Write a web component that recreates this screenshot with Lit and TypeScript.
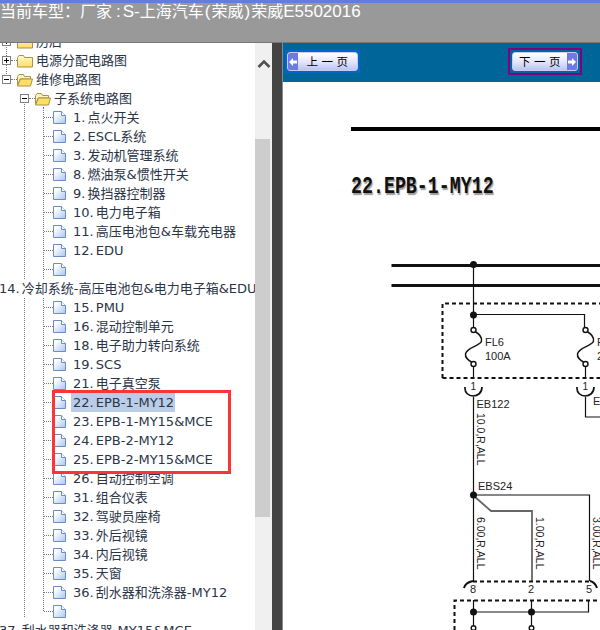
import { LitElement, html, svg, css } from "lit";
import { customElement } from "lit/decorators.js";

type Row = { t: string; kind: "file" | "folder" | "flat"; depth?: number; box?: "+" | "-"; sel?: boolean };
const f = (t: string, sel = false): Row => ({ t, kind: "file", sel });
const rows: Row[] = [
  { t: "历后", kind: "folder", depth: 0, box: "+" },
  { t: "电源分配电路图", kind: "folder", depth: 0, box: "+" },
  { t: "维修电路图", kind: "folder", depth: 0, box: "-" },
  { t: "子系统电路图", kind: "folder", depth: 1, box: "-" },
  f("1. 点火开关"), f("2. ESCL系统"), f("3. 发动机管理系统"), f("8. 燃油泵&惯性开关"), f("9. 换挡器控制器"),
  f("10. 电力电子箱"), f("11. 高压电池包&车载充电器"), f("12. EDU"), f(""),
  { t: "14. 冷却系统-高压电池包&电力电子箱&EDU", kind: "flat" },
  f("15. PMU"), f("16. 混动控制单元"), f("18. 电子助力转向系统"), f("19. SCS"), f("21. 电子真空泵"),
  f("22. EPB-1-MY12", true), f("23. EPB-1-MY15&MCE"), f("24. EPB-2-MY12"), f("25. EPB-2-MY15&MCE"),
  f("26. 自动控制空调"), f("31. 组合仪表"), f("32. 驾驶员座椅"), f("33. 外后视镜"), f("34. 内后视镜"),
  f("35. 天窗"), f("36. 刮水器和洗涤器-MY12"), f(""),
  { t: "37. 刮水器和洗涤器-MY15&MCE", kind: "flat" },
];

const fileIcon = html`<svg class="ico" width="13" height="15" viewBox="0 0 13 15">
  <defs><linearGradient id="fg" x1="0" y1="0" x2="1" y2="1"><stop offset="0.2" stop-color="#fff"/><stop offset="1" stop-color="#a9c6f2"/></linearGradient></defs>
  <path d="M0.5 1.5H8.5L12.500 5.500V13.500H0.5Z" fill="url(#fg)" stroke="#6d8cc6"/><path d="M8.500 1.500V5.500H12.500" fill="#fff" stroke="#6d8cc6"/></svg>`;
const folderClosed = html`<svg class="ico" width="16" height="14" viewBox="0 0 16 14">
  <defs><linearGradient id="fy" x1="0" y1="0" x2="0" y2="1"><stop offset="0" stop-color="#fffbd0"/><stop offset="1" stop-color="#ffdc60"/></linearGradient></defs>
  <path d="M0.500 3.500L2 1.500H6.500L7.500 3.500H15.500V13H0.500Z" fill="url(#fy)" stroke="#a8924c"/></svg>`;
const folderOpen = html`<svg class="ico" width="16" height="14" viewBox="0 0 16 14">
  <path d="M0.500 3.500L2 1.500H6.500L7.500 3.500H13.500V6H3L0.500 13Z" fill="#fff4b8" stroke="#a8924c"/><path d="M0.500 13L3.500 6H15.500L13.500 13Z" fill="#ffde68" stroke="#a8924c"/></svg>`;

const wire = "#111";
const fuse = (x: number) => svg`
  <path d="M${x + 1.5} 331.5C${x + 6} 334 ${x + 8.500} 337 ${x + 8} 341C${x + 7.500} 346 ${x - 7} 347 ${x - 8} 354C${x - 8.500} 358 ${x - 4} 361 ${x - 1} 362.500" fill="none" stroke="${wire}" stroke-width="1.5"/>
  <circle cx="${x}" cy="330" r="2.500" fill="#fff" stroke="${wire}" stroke-width="1.4"/>
  <circle cx="${x}" cy="364" r="2.500" fill="#fff" stroke="${wire}" stroke-width="1.4"/>`;
const vtext = (x: number, y: number, t: string) => svg`<text class="d v" transform="translate(${x} ${y}) rotate(90)">${t}</text>`;

const diagram = svg`
  <rect x="391.5" y="264" width="209" height="3" fill="#111"/>
  <rect x="391.5" y="284" width="209" height="3" fill="#111"/>
  <g fill="none" stroke="${wire}" stroke-width="1.2">
    <path d="M473.5 265V329M473.5 366V379M473.5 397V495M473.5 495H589.5V581M473.5 495V581"/>
    <path d="M473.5 314.5H584.5V327M585.5 366V379M585.5 397V417H600"/>
    <path d="M473.500 600V625M531.500 600V625M473.500 612H588.500V600"/>
  </g>
  <path d="M465 387C464 399 482 399 482 387M577 387C576 399 594 399 594 387" fill="none" stroke="${wire}" stroke-width="1.7"/>
  <path d="M475 497L491 511H532V581" fill="none" stroke="#666" stroke-width="1.8"/>
  <path d="M442.5 378V303.5H600M442.5 378H600M473 581.5H590M454.5 630V600.5H600" fill="none" stroke="#111" stroke-width="2" stroke-dasharray="4 3"/>
  <path d="M464 588C465 584 468 582 473 581M590 581C594 582 596 585 597 588" fill="none" stroke="#111" stroke-width="2"/>
  <circle cx="473.5" cy="264.5" r="3.5" fill="#111"/>
  <circle cx="473.5" cy="315" r="3.5" fill="#111"/>
  <circle cx="473.5" cy="495" r="3.5" fill="#111"/>
  <circle cx="473.5" cy="612" r="3.5" fill="#111"/>
  <circle cx="531.5" cy="612" r="3.5" fill="#111"/>
  ${fuse(473.5)}${fuse(585.5)}
  <circle cx="473.5" cy="628" r="2.3" fill="#fff" stroke="#111" stroke-width="1.4"/>
  <circle cx="531.5" cy="628" r="2.3" fill="#fff" stroke="#111" stroke-width="1.4"/>
  <text class="d" x="485" y="346">FL6</text>
  <text class="d" x="485" y="360">100A</text>
  <text class="d" x="597" y="346">F</text>
  <text class="d" x="597" y="360">2</text>
  <text class="d s" x="470.500" y="390">1</text>
  <text class="d s" x="582.500" y="390">1</text>
  <text class="d" x="476.5" y="408">EB122</text>
  <text class="d" x="593" y="405">E</text>
  <text class="d" x="478" y="490">EBS24</text>
  ${vtext(477, 413, "10.0,R,ALL")}
  ${vtext(477, 517, "6.00,R,ALL")}
  ${vtext(535.5, 517, "1.00,R,ALL")}
  ${vtext(592.5, 517, "3.00,R,ALL")}
  <text class="d" x="470" y="593">8</text>
  <text class="d" x="528" y="593">2</text>
  <text class="d" x="586" y="593">5</text>`;

@customElement("app-root")
export class AppRoot extends LitElement {
  static styles = css`
    :host { display: block; width: 600px; height: 630px; overflow: hidden; background: #fff;
      font-family: "DejaVu Sans", "Noto Sans CJK SC", sans-serif; }
    .top { height: 43px; box-sizing: border-box; background: #999; border-bottom: 1px solid #777;
      border-top: 3px solid #5f80d6; overflow: hidden; }
    .title { color: #fff; font: 16px/18px "Liberation Sans", "Noto Sans CJK SC", sans-serif; white-space: nowrap; }
    .la { font-size: 17px; }
    .colon { margin: 0 2px 0 4px; }
    .pn { margin: 0 1px; }
    .main { display: flex; height: 587px; }
    .tree { position: relative; width: 255px; overflow: hidden; background: #fff; color: #2b3548;
      font: 13px/19px "DejaVu Sans", "Noto Sans CJK SC", sans-serif; word-spacing: -2px; }
    .list { margin-top: -11px; }
    .row { display: flex; align-items: center; height: 19px; white-space: nowrap; position: relative; }
    .row.flat { background: #fff; z-index: 1; }
    .row.flat .lab { padding: 0; margin-left: -1px; }
    .vl { position: absolute; width: 0; border-left: 1px dotted #777; }
    .vl.a { left: 6px; top: 0; height: 33px; }
    .vl.b { left: 24px; top: 58px; height: 516px; }
    .vl.c { left: 43px; top: 64px; height: 504px; }
    .box { position: relative; width: 9px; height: 9px; box-sizing: border-box; border: 1px solid #808080; background: #fff; flex: none; z-index: 1; }
    .box::before { content: ""; position: absolute; left: 1px; right: 1px; top: 3px; height: 1px; background: #000; }
    .box.plus::after { content: ""; position: absolute; top: 1px; bottom: 1px; left: 3px; width: 1px; background: #000; }
    .hl { border-top: 1px dotted #777; flex: none; }
    .d0 { padding-left: 2px; }
    .d0 .hl { width: 6px; }
    .d1 { padding-left: 20px; }
    .d1 .hl { width: 6px; }
    .file { padding-left: 44px; }
    .file .hl { width: 9px; }
    .ico { flex: none; display: block; }
    .lab { padding: 0 1px 0 2px; }
    .folder .lab { margin-left: 1px; }
    .file .lab { margin-left: 5px; }
    .lab.sel { background: #b9cde6; }
    .red { position: absolute; left: 52px; top: 347px; width: 179px; height: 84px; box-sizing: border-box; border: 3px solid #fb3438; z-index: 2; }
    .sb { position: relative; width: 17px; background: #f0f0f0; flex: none; }
    .sb svg { position: absolute; left: 2px; top: 15px; }
    .thumb { position: absolute; left: 0; top: 96px; width: 15px; height: 378px; background: #cdcdcd; }
    .split { width: 10px; background: #444; border-right: 1px solid #8a8a8a; flex: none; }
    .right { flex: 1; min-width: 0; display: flex; flex-direction: column; }
    .nav { height: 39px; flex: none; background: #069; display: flex; align-items: center; gap: 148px; padding: 0 0 2px 2px; box-sizing: border-box; }
    .frame { display: block; box-sizing: border-box; flex: none; }
    .frame.prev { width: 75px; height: 23px; border: 2px solid #0066cc; }
    .frame.next { width: 74px; height: 27px; border: 2px solid #800080; padding: 2px; }
    .btn { display: flex; align-items: center; height: 100%; box-sizing: border-box; border-radius: 3px; overflow: hidden;
      background: linear-gradient(#fff, #e6e6fb 50%, #bfc3f0); border: 1px solid #c9cbf0; }
    .tx { flex: 1; text-align: center; color: #000; font: 11.5px/1 "Noto Sans CJK SC", sans-serif; letter-spacing: 3.5px; padding-left: 3px; white-space: pre; }
    .ar { width: 10px; height: 100%; background: #6f78e6; flex: none; display: flex; align-items: center; justify-content: center; }
    .page { flex: 1; min-height: 0; position: relative; background: #fff; }
    .page svg { position: absolute; left: 0; top: 0; }
    .rule { position: absolute; left: 68px; right: 0; top: 45px; height: 4px; background: #000; }
    .h { position: absolute; left: 68px; top: 93px; font: bold 18.3px/24px "Liberation Mono", monospace; color: #111;
      text-shadow: 1px 1px 1px #999; white-space: nowrap; transform: scaleY(1.3); transform-origin: 0 50%; }
    .d { font: 11px "Liberation Sans", sans-serif; fill: #222; }
    .s { font-size: 10px; }
    .v { font-size: 10.5px; }
  `;

  private row(r: Row) {
    if (r.kind === "flat") return html`<div class="row flat"><span class="lab">${r.t}</span></div>`;
    if (r.kind === "folder") {
      return html`<div class="row folder d${r.depth}">
        <span class="box ${r.box === "+" ? "plus" : ""}"></span><span class="hl"></span>
        ${r.box === "-" ? folderOpen : folderClosed}<span class="lab">${r.t}</span></div>`;
    }
    return html`<div class="row file"><span class="hl"></span>${fileIcon}<span class="lab ${r.sel ? "sel" : ""}">${r.t}</span></div>`;
  }

  render() {
    return html`
      <div class="top"><div class="title">当前车型：厂家<span class="la colon">:</span><span class="la">S-</span>上海汽车<span class="la pn">(</span>荣威<span class="la pn">)</span>荣威<span class="la">E5502016</span></div></div>
      <div class="main">
        <div class="tree">
          <span class="vl a"></span><span class="vl b"></span><span class="vl c"></span>
          <div class="list">${rows.map((r) => this.row(r))}</div>
          <div class="red"></div>
        </div>
        <div class="sb">
          <svg width="14" height="12" viewBox="0 0 14 12"><path d="M1.5 9L7 3.5L12.5 9" fill="none" stroke="#505050" stroke-width="2.6"/></svg>
          <div class="thumb"></div>
        </div>
        <div class="split"></div>
        <div class="right">
          <div class="nav">
            <div class="frame prev"><div class="btn">
              <span class="ar"><svg width="8" height="8" viewBox="0 0 8 8"><path d="M0 4L4 0V2.500H8V5.500H4V8Z" fill="#fff"/></svg></span>
              <span class="tx">上一页</span></div></div>
            <div class="frame next"><div class="btn">
              <span class="tx">下一页</span>
              <span class="ar"><svg width="8" height="8" viewBox="0 0 8 8"><path d="M8 4L4 0V2.500H0V5.500H4V8Z" fill="#fff"/></svg></span></div></div>
          </div>
          <div class="page">
            <svg width="317" height="548" viewBox="283 82 317 548">${diagram}</svg>
            <div class="rule"></div>
            <div class="h">22.EPB-1-MY12</div>
          </div>
        </div>
      </div>`;
  }
}
